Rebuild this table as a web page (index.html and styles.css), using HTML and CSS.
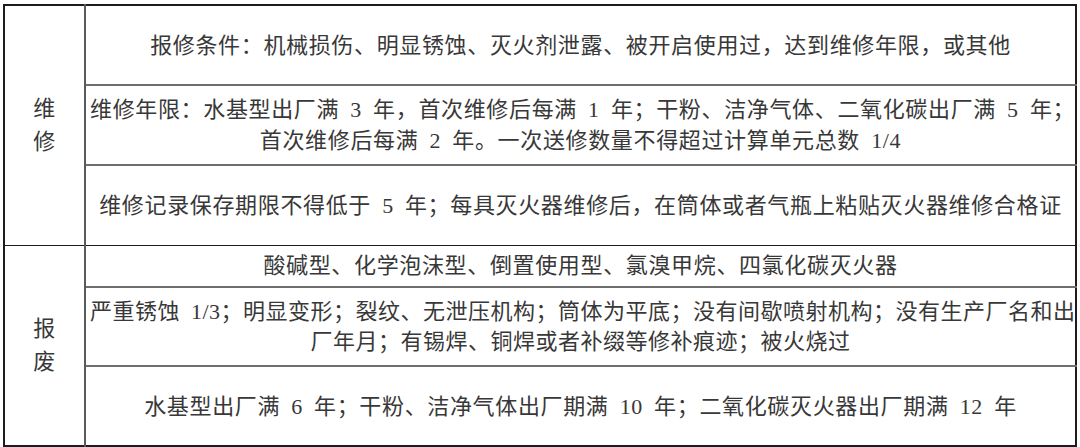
FILE: index.html
```html
<!DOCTYPE html>
<html lang="zh-CN">
<head>
<meta charset="utf-8">
<title>灭火器维修与报废</title>
<link rel="stylesheet" href="styles.css">
</head>
<body>
<div class="page">
<table class="spec">
  <tbody class="section">
    <tr class="r80">
      <th class="cat" rowspan="3"><span>维</span><span>修</span></th>
      <td>报修条件：机械损伤、明显锈蚀、灭火剂泄露、被开启使用过，达到维修年限，或其他</td>
    </tr>
    <tr class="r80">
      <td><span class="line start">维修年限：水基型出厂满 3 年，首次维修后每满 1 年；干粉、洁净气体、二氧化碳出厂满 5 年；</span><span class="line">首次维修后每满 2 年。一次送修数量不得超过计算单元总数 1/4</span></td>
    </tr>
    <tr class="r80">
      <td>维修记录保存期限不得低于 5 年；每具灭火器维修后，在筒体或者气瓶上粘贴灭火器维修合格证</td>
    </tr>
  </tbody>
  <tbody class="section">
    <tr class="r42">
      <th class="cat" rowspan="3"><span>报</span><span>废</span></th>
      <td>酸碱型、化学泡沫型、倒置使用型、氯溴甲烷、四氯化碳灭火器</td>
    </tr>
    <tr class="r79">
      <td class="tight"><span class="line start">严重锈蚀 1/3；明显变形；裂纹、无泄压机构；筒体为平底；没有间歇喷射机构；没有生产厂名和出</span><span class="line">厂年月；有锡焊、铜焊或者补缀等修补痕迹；被火烧过</span></td>
    </tr>
    <tr class="r80">
      <td>水基型出厂满 6 年；干粉、洁净气体出厂期满 10 年；二氧化碳灭火器出厂期满 12 年</td>
    </tr>
  </tbody>
</table>
</div>
</body>
</html>
```

FILE: styles.css
```css
html, body {
  margin: 0;
  padding: 0;
  background: #ffffff;
}

.page {
  padding: 4px 0 0 3px;
}

.spec {
  width: 1074px;
  border-collapse: collapse;
  table-layout: fixed;
  border: 2px solid #1c1c1c;
  font-family: "Liberation Serif", "Noto Sans CJK SC", serif;
  font-size: 22px;
  letter-spacing: 0.65px;
  word-spacing: 5px;
  color: #383838;
}

.section {
  border-top: 1px solid #1c1c1c;
}

.spec th,
.spec td {
  padding: 0 4px;
  text-align: center;
  vertical-align: middle;
  white-space: nowrap;
  font-weight: normal;
  line-height: 31px;
}

.spec td {
  border-top: 2px solid #6e6e6e;
}

.section tr:first-child td {
  border-top: 1px solid #1c1c1c;
}

.cat {
  width: 71px;
  border-right: 2px solid #5a5a5a;
}

.cat span {
  display: block;
  line-height: 33px;
}

.line {
  display: block;
}

.line.start {
  text-align: left;
}

.tight {
  padding: 0;
  letter-spacing: 0.5px;
}

.tight .line {
  line-height: 30px;
}

.r80 { height: 80px; }
.r79 { height: 79px; }
.r42 { height: 42px; }
```
